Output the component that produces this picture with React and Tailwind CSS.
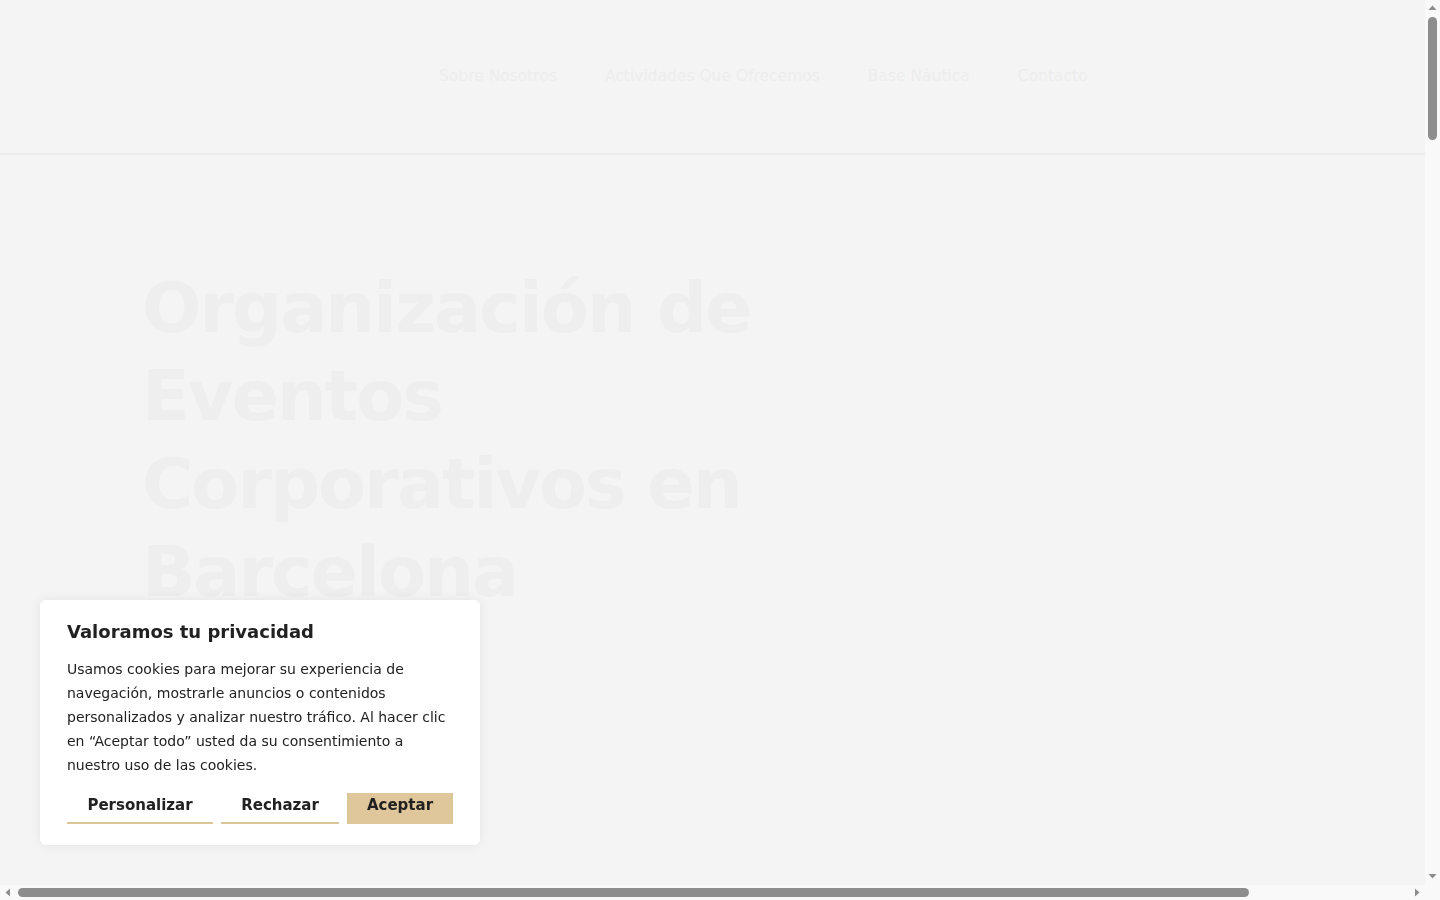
const NAV = ["Sobre Nosotros", "Actividades Que Ofrecemos", "Base Náutica", "Contacto"];

const Arrow = ({ points }) => (
  <svg width="15" height="15" viewBox="0 0 15 15" className="shrink-0">
    <polygon points={points} fill="#8d8d8d" />
  </svg>
);

function CookieBanner() {
  return (
    <div className="fixed left-10 bottom-[55px] w-[440px] bg-white rounded-md shadow-[0_0_12px_rgba(0,0,0,0.07)] px-[27px] pt-[18px] pb-[21px] text-[#212121]">
      <h3 className="text-[18px] leading-[28px] font-bold">Valoramos tu privacidad</h3>
      <p className="mt-[11px] text-[14px] leading-[24px]">
        Usamos cookies para mejorar su experiencia de navegación, mostrarle anuncios o contenidos
        personalizados y analizar nuestro tráfico. Al hacer clic en “Aceptar todo” usted da su
        consentimiento a nuestro uso de las cookies.
      </p>
      <div className="mt-4 flex gap-2">
        <button className="w-[146px] pt-[2px] pb-[6px] text-[15px] leading-[21px] font-bold border-b-2 border-[#dcc597]">
          Personalizar
        </button>
        <button className="w-[118px] pt-[2px] pb-[6px] text-[15px] leading-[21px] font-bold border-b-2 border-[#dcc597]">
          Rechazar
        </button>
        <button className="w-[106px] pt-[2px] pb-[6px] text-[15px] leading-[21px] font-bold bg-[#e0c79b] border-b-2 border-[#e0c79b]">
          Aceptar
        </button>
      </div>
    </div>
  );
}

function Page() {
  return (
    <div className="w-[1615px]">
      <header className="h-[155px] border-b-2 border-[#ebebeb] flex items-center pl-[439px] pt-px">
        <nav className="flex gap-12 text-[15.5px] text-[#ededed]">
          {NAV.map((item) => (
            <a key={item} href="#">{item}</a>
          ))}
        </nav>
      </header>

      {/* hero title is still fading in */}
      <section className="pl-[142px] pt-[109px]">
        <h1 className="max-w-[700px] text-[70px] leading-[88px] tracking-[-2px] font-bold text-[#eeeeee]">
          Organización de Eventos Corporativos en Barcelona
        </h1>
      </section>
    </div>
  );
}

export default function App() {
  return (
    <div className="h-screen w-screen flex flex-col overflow-hidden bg-[#f4f4f4] font-['DejaVu_Sans',sans-serif]">
      <div className="flex-1 flex min-h-0">
        <main className="flex-1 overflow-hidden">
          <Page />
        </main>
        {/* vertical scrollbar */}
        <div className="w-[15px] bg-[#f9f9f9] flex flex-col items-center">
          <Arrow points="3.5,10 7.5,5.5 11.5,10" />
          <div className="w-[9px] h-[123px] mt-[2px] rounded-full bg-[#8d8d8d]" />
          <div className="flex-1" />
          <Arrow points="3.5,4 7.5,8.5 11.5,4" />
        </div>
      </div>
      {/* horizontal scrollbar */}
      <div className="h-[15px] flex bg-[#f9f9f9]">
        <div className="flex-1 flex items-center">
          <Arrow points="10,3.5 5.5,7.5 10,11.5" />
          <div className="w-[1231px] h-[9px] ml-[3px] rounded-full bg-[#8d8d8d]" />
          <div className="flex-1" />
          <Arrow points="5,3.5 9.5,7.5 5,11.5" />
        </div>
        <div className="w-[15px] bg-[#f9f9f9]" />
      </div>

      <CookieBanner />
    </div>
  );
}
